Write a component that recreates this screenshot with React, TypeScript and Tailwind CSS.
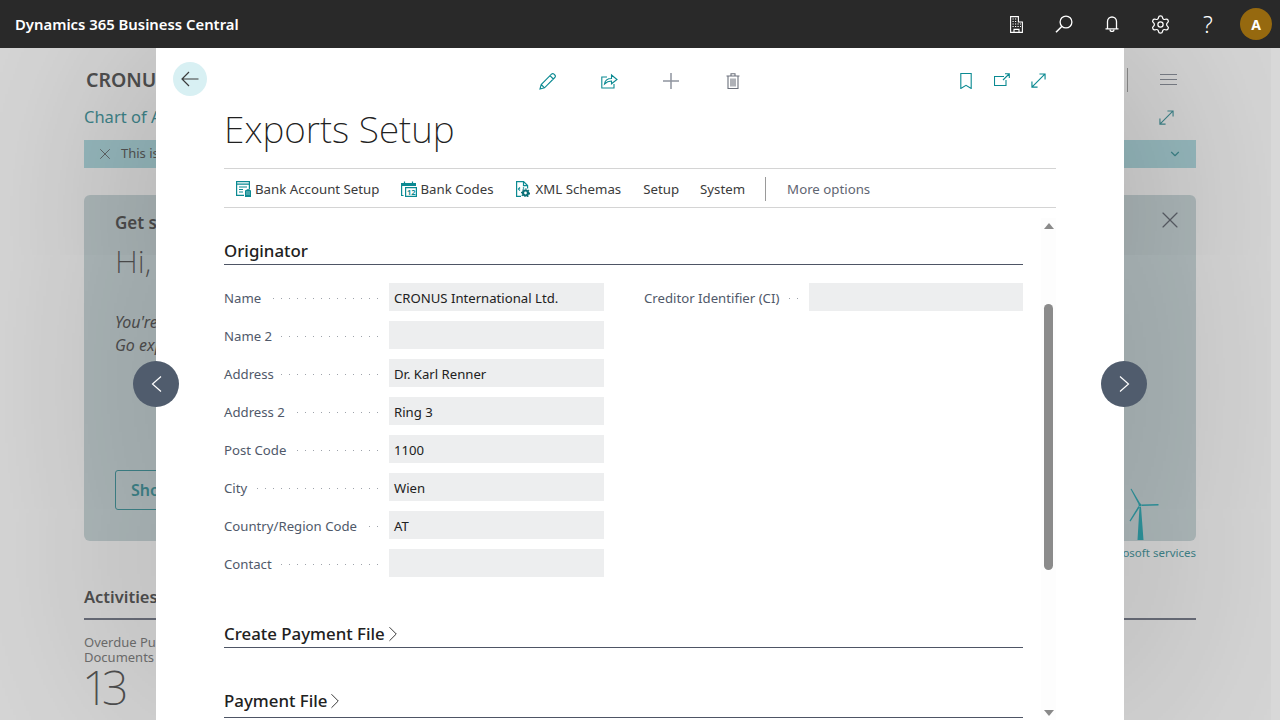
import { ChevronDown, ChevronRight, Settings, X } from "lucide-react";

const teal = "#0b8a92";

type Field = { label: string; value?: string };

const leftFields: Field[] = [
  { label: "Name", value: "CRONUS International Ltd." },
  { label: "Name 2" },
  { label: "Address", value: "Dr. Karl Renner" },
  { label: "Address 2", value: "Ring 3" },
  { label: "Post Code", value: "1100" },
  { label: "City", value: "Wien" },
  { label: "Country/Region Code", value: "AT" },
  { label: "Contact" },
];

function ExpandIcon({ color = teal }: { color?: string }) {
  return (
    <svg width="15" height="15" viewBox="0 0 16 16" fill="none" stroke={color} strokeWidth="1.200">
      <path d="M1 15 15 1M9 1h6v6M1 9v6h6" />
    </svg>
  );
}

function HeaderIcons() {
  return (
    <div className="flex items-center">
      <div className="flex w-[48px] justify-center">
        <svg width="13" height="17" viewBox="0 0 13 17" fill="none" stroke="#fff" strokeWidth="1.100">
          <path d="M.6 16.400V.6h7.800v5.400h4v10.400zM4 16.400v-3h5v3" />
          <path d="M2.500 3h1.200M5 3h1.200M2.500 5.500h1.200M5 5.500h1.200M2.500 8h1.200M5 8h1.200M7.500 8h1.200M10 8h1M2.500 10.500h1.200M5 10.500h1.200M7.500 10.500h1.200M10 10.500h1" strokeWidth="1" />
        </svg>
      </div>
      <div className="flex w-[48px] justify-center">
        <svg width="18" height="18" viewBox="0 0 18 18" fill="none" stroke="#fff" strokeWidth="1.300">
          <circle cx="11" cy="7" r="5.900" />
          <path d="M7 11.200 1 17.300" strokeWidth="1.600" />
        </svg>
      </div>
      <div className="flex w-[48px] justify-center">
        <svg width="14" height="16" viewBox="0 0 14 16" fill="none" stroke="#fff" strokeWidth="1.300">
          <path d="M2.500 12.800V5.500a4.500 4.500 0 0 1 9 0v7.300M.5 12.800h13" />
          <path d="M5 13.500a2 2 0 0 0 4 0" />
        </svg>
      </div>
      <div className="flex w-[48px] justify-center text-white">
        <Settings size={21} strokeWidth={1.400} />
      </div>
      <div className="flex w-[48px] justify-center text-[23px] leading-none font-light text-white">?</div>
      <div className="ml-[8px] mr-[8px] flex h-[32px] w-[32px] items-center justify-center rounded-full bg-[#96690f] text-[14px] font-bold text-white">
        A
      </div>
    </div>
  );
}

function BackgroundPage() {
  return (
    <div className="flex h-[672px] flex-col overflow-hidden bg-[#d8d8d8] px-[84px] text-[#505050]">
      <div className="flex h-[62px] items-center pt-[1px]">
        <span className="ml-[2px] text-[19.500px] font-semibold text-[#505050]">CRONUS International Ltd.</span>
        <div className="ml-auto flex items-center">
          <div className="h-[24px] w-px bg-[#8e8e8e]" />
          <div className="ml-[32px] mr-[19px] flex flex-col gap-[4px]">
            <div className="h-px w-[17px] bg-[#7b7f88]" />
            <div className="h-px w-[17px] bg-[#7b7f88]" />
            <div className="h-px w-[17px] bg-[#7b7f88]" />
          </div>
        </div>
      </div>
      <div className="flex h-[14px] items-center justify-between pr-[22px]">
        <span className="text-[16.500px] text-[#3f858b]">Chart of Accounts</span>
        <ExpandIcon color="#3f858b" />
      </div>
      <div className="mb-[27px] mt-[16px] flex h-[28px] items-center bg-[#99bcc1] pl-[12px] pr-[14px] text-[13px] text-[#555]">
        <X size={18} strokeWidth={1.100} className="mr-[7px]" />
        <span>This is a demo company</span>
        <ChevronDown size={14} className="ml-auto text-[#3f858b]" />
      </div>
      <div className="relative h-[346px] rounded-[6px] bg-[#b0bbbd] pl-[31px] pr-[18px] pt-[16px]">
        <X size={28} strokeWidth={1} className="absolute right-[12px] top-[11px] text-[#5c6069]" />
        <div className="text-[17px] leading-[24px] font-semibold text-[#505050]">Get started</div>
        <div className="mt-[3px] text-[32px] leading-[46px] font-extralight text-[#505050]">Hi,</div>
        <div className="mt-[27px] text-[16px] leading-[23px] text-[#505050] italic">
          <div>You're all set</div>
          <div>Go explore</div>
        </div>
        <div className="mt-[113px] flex h-[40px] w-[130px] items-center rounded-[3px] border border-[#3f858b] pl-[15px] text-[16px] font-semibold text-[#3f858b]">
          Show
        </div>
        <svg className="absolute left-[1044px] top-[293px]" width="31" height="53" viewBox="0 0 31 53" fill={"#2f97a0"}>
          <path d="M11 17 2.500 1l1-.3L12.500 16zM13.500 16.500 30.500 16v1.500l-17 .5zM11.500 19.500 2.500 33.500l-1-.8L10.500 18zM11.500 19h1.500l2.500 33H9.500z" />
          <circle cx="12" cy="17" r="1.500" />
        </svg>
      </div>
      <div className="mt-[3px] text-right text-[11.500px] text-[#3f858b]">Microsoft services</div>
      <div className="mt-[24px] h-[35px] border-b-2 border-[#6a6e7a] text-[16.500px] font-semibold text-[#505050]">Activities</div>
      <div className="mt-[15px] text-[13px] leading-[15px] text-[#707070]">
        <div>Overdue Purchase</div>
        <div>Documents</div>
      </div>
      <div className="-ml-[2px] text-[47px] leading-[44px] font-extralight tracking-[-7px] text-[#505050]">13</div>
    </div>
  );
}

function Section({ title, arrow, height }: { title: string; arrow?: boolean; height: string }) {
  return (
    <div className={`flex items-start border-b border-[#4e5565] text-[16.850px] leading-[26px] font-medium text-[#212121] ${height}`}>
      {title}
      {arrow && <ChevronRight size={26} strokeWidth={0.900} className="-ml-[5px] text-[#333]" />}
    </div>
  );
}

function FieldRow({ label, value }: Field) {
  return (
    <div className="flex h-[28px] items-center">
      <div className="flex w-[154px] shrink-0 items-center pt-[3px] text-[13.200px] text-[#50596a]">
        <span className="whitespace-nowrap">{label}</span>
        <div className="ml-[7px] h-px flex-1 bg-[repeating-linear-gradient(to_left,#9ea3ab_0,#9ea3ab_1px,transparent_1px,transparent_8px)]" />
      </div>
      <div className="ml-[11px] flex h-[28px] flex-1 items-center bg-[#edeeef] pl-[5px] pt-[3px] text-[13.150px] text-[#212121]">{value}</div>
    </div>
  );
}

function Scrollbar() {
  return (
    <div className="ml-[18px] flex h-[512px] w-[15px] flex-col items-center bg-[#fdfdfd] pt-[5px]">
      <div className="h-0 w-0 border-x-[5px] border-b-[6px] border-x-transparent border-b-[#8a8a8a]" />
      <div className="mt-[75px] h-[266px] w-[9px] rounded-full bg-[#8b8b8b]" />
      <div className="mt-[140px] h-0 w-0 border-x-[5px] border-t-[6px] border-x-transparent border-t-[#8a8a8a]" />
    </div>
  );
}

function Modal() {
  return (
    <div className="absolute bottom-0 left-[156px] right-[156px] top-[48px] overflow-hidden bg-white">
      <div className="flex h-[62px] items-center">
        <div className="ml-[17px] flex h-[34px] w-[34px] items-center justify-center rounded-full bg-[#d8f0f3]">
          <svg width="18" height="16" viewBox="0 0 18 16" fill="none" stroke="#3c3c3c" strokeWidth="1.200">
            <path d="M17.500 8H1M8 1 1 8l7 7" />
          </svg>
        </div>
        <div className="ml-[309px] flex translate-y-[2px]">
          <div className="flex w-[62px] justify-center">
            <svg width="17" height="17" viewBox="0 0 17 17" fill="none" stroke={teal} strokeWidth="1.100">
              <path d="M1 16l1.200-4.500L12.500 1.200a1.800 1.800 0 0 1 2.500 0l.8.800a1.800 1.800 0 0 1 0 2.500L5.500 14.800zM2.200 11.500l3.300 3.300M11 2.700l3.300 3.300" />
            </svg>
          </div>
          <div className="flex w-[62px] justify-center">
            <svg width="17" height="16" viewBox="0 0 17 16" fill="none" stroke={teal} strokeWidth="1.100">
              <path d="M6 4H.8v11H13v-4" />
              <path d="M3.500 11c.5-3.500 3-5.500 7-5.500V2l5.500 4.500-5.500 4.300V8C7.500 8 5.500 9 3.500 11z" />
            </svg>
          </div>
          <div className="flex w-[62px] justify-center">
            <svg width="16" height="16" viewBox="0 0 16 16" fill="none" stroke="#8f949f" strokeWidth="1.500">
              <path d="M8 0v16M0 8h16" />
            </svg>
          </div>
          <div className="flex w-[62px] justify-center">
            <svg width="14" height="16" viewBox="0 0 14 16" fill="none" stroke="#6c717c" strokeWidth="1.100">
              <path d="M.5 3h13M2 3v12.500h10V3M5 3V.8h4V3M5 5.500v8M7 5.500v8M9 5.500v8" />
            </svg>
          </div>
        </div>
        <div className="ml-[184px] flex translate-y-[2px]">
          <div className="flex w-[36px] justify-center">
            <svg width="12" height="16" viewBox="0 0 12 16" fill="none" stroke={teal} strokeWidth="1.100">
              <path d="M.8.500h10.400v15L6 12.300.8 15.500z" />
            </svg>
          </div>
          <div className="flex w-[36px] justify-center">
            <svg width="16" height="13" viewBox="0 0 16 13" fill="none" stroke={teal} strokeWidth="1.100">
              <path d="M10 3.500H.5v9h11.500V7M9 7l6-6M11 .8h4.300V5" />
            </svg>
          </div>
          <div className="flex w-[36px] justify-center">
            <ExpandIcon />
          </div>
        </div>
      </div>
      <div className="px-[68px]">
        <h1 className="h-[40px] text-[37px] leading-[38px] font-extralight text-[#212121]">Exports Setup</h1>
        <div className="mt-[18px] flex h-[40px] items-center gap-[22px] border-y border-[#d4d4d4] pl-[12px] pt-[3px] text-[13.250px] text-[#3a3a3a]">
          <div className="flex items-center gap-[4px]">
            <svg className="-translate-y-[1px]" width="15" height="16" viewBox="0 0 15 16" fill="none" stroke={teal} strokeWidth="1.200">
              <path d="M8 14.400H.6V.6h12.800v8M.6 3.200h12.800M3 6h8M3 8.500h4M3 11h4" />
              <path d="M9 9.500l3-1.500 3 1.500V16H9z" fill={teal} stroke="none" />
              <path d="M10.500 11h1M12.500 11h1M10.500 13h1M12.500 13h1" stroke="#fff" strokeWidth="1" />
            </svg>
            Bank Account Setup
          </div>
          <div className="flex items-center gap-[3px]">
            <svg className="-translate-y-[1px]" width="16" height="16" viewBox="0 0 16 16" fill="none" stroke={teal} strokeWidth="1.200">
              <path d="M2.500 14.500H.6V2.500h13.800v2" />
              <path d="M.6 2.500h13.800v2H.6z" fill={teal} />
              <path d="M3.500.5v2M11.500.5v2" />
              <path d="M4.600 6.600h10.800v8.800H4.600z" />
              <text x="6" y="14" fontSize="7.500" fontWeight="700" fill={teal} stroke="none">12</text>
            </svg>
            Bank Codes
          </div>
          <div className="flex items-center gap-[6px]">
            <svg className="-translate-y-[1px]" width="14" height="16" viewBox="0 0 14 16" fill="none" stroke={teal} strokeWidth="1.200">
              <path d="M5 15.400H.6V.6h7l4 4v3M7.500.6v4h4" />
              <path d="M4 6.500l-1.500 1.500L4 9.500M7 6.500l1 1" />
              <circle cx="9.500" cy="12" r="2.500" stroke="#0a6f76" strokeWidth="2.200" />
              <circle cx="9.500" cy="12" r="4" stroke="#0a6f76" strokeWidth="1.100" strokeDasharray="1.500 1.500" />
            </svg>
            XML Schemas
          </div>
          <span>Setup</span>
          <span className="-ml-[1px]">System</span>
          <div className="-ml-[2px] -mr-[1px] h-[24px] w-px -translate-y-[1px] bg-[#9a9a9a]" />
          <span className="text-[#5f6672]">More options</span>
        </div>
        <div className="flex pt-[10px]">
          <div className="w-[799px]">
            <div className="mt-[20px]">
              <Section title="Originator" height="h-[27px]" />
            </div>
            <div className="mt-[18px] grid grid-cols-[380px_379px] gap-x-[40px]">
              <div className="flex flex-col gap-[10px]">
                {leftFields.map((f) => (
                  <FieldRow key={f.label} label={f.label} value={f.value} />
                ))}
              </div>
              <div>
                <FieldRow label="Creditor Identifier (CI)" />
              </div>
            </div>
            <div className="mt-[44px]">
              <Section title="Create Payment File" arrow height="h-[27px]" />
            </div>
            <div className="mt-[40px]">
              <Section title="Payment File" arrow height="h-[30px]" />
            </div>
          </div>
          <Scrollbar />
        </div>
      </div>
    </div>
  );
}

function NavButton({ className, d }: { className: string; d: string }) {
  return (
    <button className={`absolute top-[361px] flex h-[46px] w-[46px] items-center justify-center rounded-full bg-[#505c6d] ${className}`}>
      <svg width="11" height="16" viewBox="0 0 11 16" fill="none" stroke="#fff" strokeWidth="1.200">
        <path d={d} />
      </svg>
    </button>
  );
}

export default function App() {
  return (
    <div className="relative h-[720px] w-[1280px] overflow-hidden font-['Noto_Sans',sans-serif]">
      <header className="relative z-10 flex h-[48px] items-center justify-between bg-[#292929] pl-[15px] text-[14.850px] font-semibold text-white">
        <span>Dynamics 365 Business Central</span>
        <HeaderIcons />
      </header>
      <BackgroundPage />
      <div className="absolute bottom-0 left-[156px] right-[156px] top-[48px] shadow-[0_0_300px_rgba(0,0,0,0.3)]" />
      <Modal />
      <NavButton className="left-[133px]" d="M10 .5 1.500 8l8.500 7.500" />
      <NavButton className="left-[1101px]" d="M1 .5 9.500 8 1 15.500" />
    </div>
  );
}
